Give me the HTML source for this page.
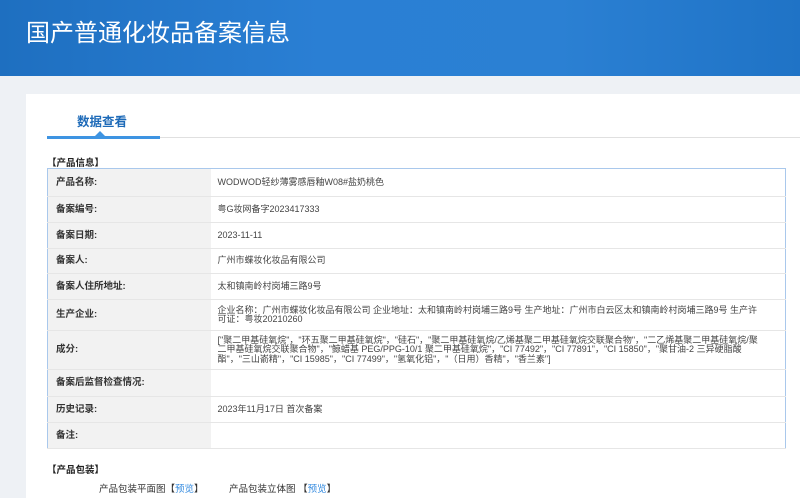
<!DOCTYPE html>
<html><head><meta charset="utf-8"><style>
*{margin:0;padding:0;box-sizing:border-box}
body{width:800px;height:498px;overflow:hidden;background:#eef1f5;font-family:"Liberation Sans","Noto Sans CJK SC",sans-serif;position:relative}
.hdr{position:absolute;left:0;top:0;width:800px;height:76px;background:linear-gradient(90deg,#1e6fc0 0%,#2a7fd4 40%,#2b80d3 70%,#1f73c6 100%)}
.hdr h1{position:absolute;left:26px;top:13px;color:#fff;font-size:24px;font-weight:normal;font-family:"Noto Sans CJK SC",sans-serif}
.card{position:absolute;left:26px;top:94px;width:774px;height:404px;background:#fff}
.tab{position:absolute;left:77px;top:111px;font-size:12.5px;font-weight:bold;color:#1d6ab8}
.tl{position:absolute;left:47px;top:137px;width:753px;height:1px;background:#e0e0e0}
.tb{position:absolute;left:47px;top:136px;width:113px;height:3px;background:#3e94e2}
.tri{position:absolute;left:95px;top:131px;width:0;height:0;border-left:5px solid transparent;border-right:5px solid transparent;border-bottom:5px solid #3e94e2}
.sec{position:absolute;left:47px;font-size:9.5px;font-weight:bold;color:#222}
table{position:absolute;left:47px;top:168px;width:739px;border-collapse:collapse;border:1px solid #a9c8ec;font-size:9px;color:#444}
td{border-bottom:1px solid #e6e6e6;vertical-align:middle;line-height:9.5px}
td.l{width:163px;background:#f2f2f2;font-weight:bold;padding-left:8px;color:#333;font-size:9.5px}
td.v{padding-left:7px;padding-right:26px}
.pk{position:absolute;top:481px;font-size:9.5px;color:#333}
.pk span{color:#3a8ee0}
</style></head><body>
<div class="hdr"><h1>国产普通化妆品备案信息</h1></div>
<div class="card"></div>
<div class="tab">数据查看</div>
<div class="tl"></div><div class="tb"></div><div class="tri"></div>
<div class="sec" style="top:155px">【产品信息】</div>
<table>
<tr style="height:28px"><td class="l">产品名称:</td><td class="v">WODWOD轻纱薄雾感唇釉W08#盐奶桃色</td></tr>
<tr style="height:26px"><td class="l">备案编号:</td><td class="v">粤G妆网备字2023417333</td></tr>
<tr style="height:26px"><td class="l">备案日期:</td><td class="v">2023-11-11</td></tr>
<tr style="height:25px"><td class="l">备案人:</td><td class="v">广州市蝶妆化妆品有限公司</td></tr>
<tr style="height:26px"><td class="l">备案人住所地址:</td><td class="v">太和镇南岭村岗埔三路9号</td></tr>
<tr style="height:31px"><td class="l">生产企业:</td><td class="v">企业名称：广州市蝶妆化妆品有限公司 企业地址：太和镇南岭村岗埔三路9号 生产地址：广州市白云区太和镇南岭村岗埔三路9号 生产许可证：粤妆20210260</td></tr>
<tr style="height:39px"><td class="l">成分:</td><td class="v">["聚二甲基硅氧烷"，"环五聚二甲基硅氧烷"，"硅石"，"聚二甲基硅氧烷/乙烯基聚二甲基硅氧烷交联聚合物"，"二乙烯基聚二甲基硅氧烷/聚二甲基硅氧烷交联聚合物"，"鲸蜡基 PEG/PPG-10/1 聚二甲基硅氧烷"，"CI 77492"，"CI 77891"，"CI 15850"，"聚甘油-2 三异硬脂酸酯"，"三山嵛精"，"CI 15985"，"CI 77499"，"氢氧化铝"，"（日用）香精"，"香兰素"]</td></tr>
<tr style="height:27px"><td class="l">备案后监督检查情况:</td><td class="v"></td></tr>
<tr style="height:26px"><td class="l">历史记录:</td><td class="v">2023年11月17日 首次备案</td></tr>
<tr style="height:26px"><td class="l">备注:</td><td class="v"></td></tr>
</table>
<div class="sec" style="top:462px">【产品包装】</div>
<div class="pk" style="left:99px">产品包装平面图【<span>预览</span>】</div>
<div class="pk" style="left:229px">产品包装立体图 【<span>预览</span>】</div>
</body></html>
